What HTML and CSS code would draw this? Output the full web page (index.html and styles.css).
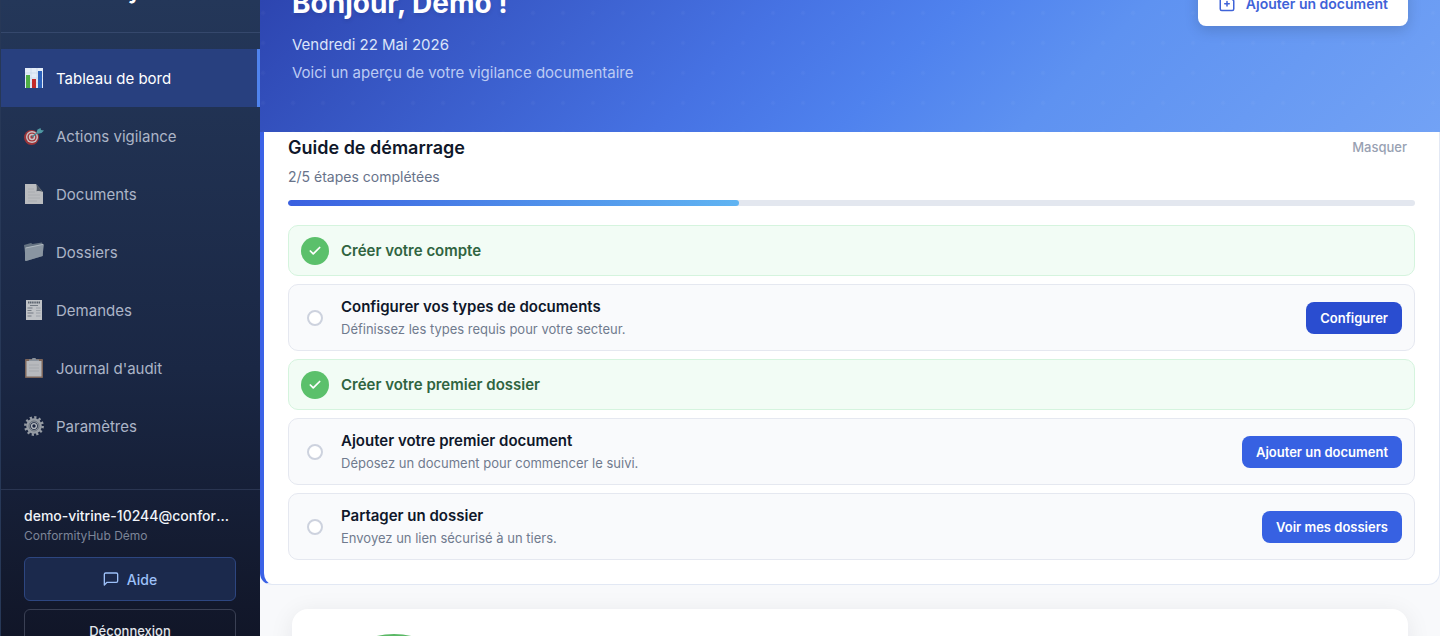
FILE: index.html
```html
<!DOCTYPE html>
<html lang="fr">
<head>
    <meta charset="UTF-8">
    <meta name="viewport" content="width=device-width, initial-scale=1.0">
    <title>ConformityHub - Tableau de bord</title>
    <link rel="stylesheet" href="styles.css">
</head>
<body>

    <aside class="sidebar">
        <div class="sidebar-header">
            <a href="#" class="brand">ConformityHub</a>
        </div>

        <nav class="sidebar-nav">
            <a href="#" class="nav-item active">
                <svg class="nav-icon" viewBox="0 0 20 20">
                    <rect x="1" y="0" width="18" height="20" fill="#e4edf8"/>
                    <path d="M1 5h18M1 10h18M1 15h18M7 0v20M13 0v20" stroke="#c3d3e8" stroke-width=".6"/>
                    <rect x="2" y="7" width="4" height="13" fill="#4fae45"/>
                    <rect x="8" y="11" width="4" height="9" fill="#c32a2a"/>
                    <rect x="14" y="3" width="4" height="17" fill="#2d63bd"/>
                </svg>
                Tableau de bord
            </a>
            <a href="#" class="nav-item">
                <svg class="nav-icon" viewBox="0 0 20 20">
                    <circle cx="7.500" cy="11.500" r="7.500" fill="#9c3439"/>
                    <circle cx="8" cy="11" r="6" fill="#c9c3c6"/>
                    <circle cx="8" cy="11" r="4.600" fill="#a5383d"/>
                    <circle cx="8" cy="11" r="3.200" fill="#c9c3c6"/>
                    <circle cx="8" cy="11" r="1.700" fill="#a5383d"/>
                    <path d="M8 11l7-5.500" stroke="#3d8590" stroke-width="1.300"/>
                    <path d="M12.500 6.500l1-3 3-1.500.5 2 3 .5-2.500 2.500-3.500.8z" fill="#4f98a3"/>
                </svg>
                Actions vigilance
            </a>
            <a href="#" class="nav-item">
                <svg class="nav-icon" viewBox="0 0 20 20">
                    <path d="M1 0h11l7 8v12H1z" fill="#b9bbbe"/>
                    <path d="M12 0l7 8c-2-1-4-1.300-6.500-.8C13 4.500 13 2 12 0z" fill="#4c5561"/>
                    <path d="M4 5h6M4 8h7M4 11h12M4 14h12M4 17h9" stroke="#a6a9ad" stroke-width=".8"/>
                </svg>
                Documents
            </a>
            <a href="#" class="nav-item">
                <svg class="nav-icon" viewBox="0 0 20 20">
                    <path d="M0 3l7-2 1.500 1L18 .5 19 3v11L2 19z" fill="#657382"/>
                    <path d="M2 5.500l17-3.500c.6 0 .9.300.8 1L18.500 14 2 19c-.6 0-1-.3-1-1L1 7c0-.8.400-1.300 1-1.500z" fill="#8995a1"/>
                    <path d="M1.500 6l17.500-3.600" stroke="#c0c8cf" stroke-width=".7"/>
                </svg>
                Dossiers
            </a>
            <a href="#" class="nav-item">
                <svg class="nav-icon" viewBox="0 0 20 20">
                    <path d="M2 0h16v20H2z" fill="#bfc2c6"/>
                    <path d="M4 2.500h12" stroke="#59616c" stroke-width="2" stroke-dasharray="1.300 .5"/>
                    <path d="M6 5.500h8M3.500 8h5M3.500 10.500h4M3.500 13h6M3.500 16h4" stroke="#6b737d" stroke-width=".9"/>
                    <path d="M12 8h4.500M12 10.500h4.500M12 13h4.500M12 16h4.500" stroke="#949aa2" stroke-width=".8"/>
                </svg>
                Demandes
            </a>
            <a href="#" class="nav-item">
                <svg class="nav-icon" viewBox="0 0 20 20">
                    <rect x="1" y="1" width="18" height="19" rx=".8" fill="#7b6459"/>
                    <rect x="2.500" y="3" width="15" height="15.500" fill="#b7b9bd"/>
                    <path d="M5 7h10M5 10h10M5 13h10" stroke="#a5a8ad" stroke-width=".9"/>
                    <path d="M5 3V1.500h3a2 2 0 014 0h3V3z" fill="#8a929c"/>
                </svg>
                Journal d'audit
            </a>
            <a href="#" class="nav-item">
                <svg class="nav-icon" viewBox="0 0 20 20" fill="none">
                    <circle cx="10" cy="10" r="8.600" stroke="#969ca4" stroke-width="2.600" stroke-dasharray="2.200 2.300"/>
                    <circle cx="10" cy="10" r="5.800" stroke="#969ca4" stroke-width="4"/>
                    <circle cx="10" cy="10" r="5" stroke="#666f7b" stroke-width="1"/>
                    <circle cx="10" cy="10" r="2.400" stroke="#b4b9bf" stroke-width="1.400"/>
                </svg>
                Paramètres
            </a>
        </nav>

        <div class="sidebar-footer">
            <div class="user-email">demo-vitrine-10244@conformityhub.fr</div>
            <div class="user-company">ConformityHub Démo</div>
            <button type="button" class="btn-help">
                <svg width="16" height="16" viewBox="0 0 24 24" fill="none" stroke="currentColor" stroke-width="2" stroke-linecap="round" stroke-linejoin="round">
                    <path d="M22 15a2 2 0 0 1-2 2H6l-4 4V5a2 2 0 0 1 2-2h16a2 2 0 0 1 2 2z"/>
                </svg>
                Aide
            </button>
            <button type="button" class="btn-logout">Déconnexion</button>
        </div>
    </aside>

    <main class="main">
        <header class="hero">
            <div class="hero-text">
                <h1>Bonjour, Démo !</h1>
                <p class="hero-date">Vendredi 22 Mai 2026</p>
                <p class="hero-subtitle">Voici un aperçu de votre vigilance documentaire</p>
            </div>
            <button type="button" class="btn-hero">
                <svg width="18" height="18" viewBox="0 0 24 24" fill="none" stroke="currentColor" stroke-width="2" stroke-linecap="round" stroke-linejoin="round">
                    <path d="M14 2H5a2 2 0 0 0-2 2v16a2 2 0 0 0 2 2h14a2 2 0 0 0 2-2V9z"/>
                    <path d="M12 10v6M9 13h6"/>
                </svg>
                Ajouter un document
            </button>
        </header>

        <section class="guide">
            <div class="guide-header">
                <h2>Guide de démarrage</h2>
                <button type="button" class="btn-hide">Masquer</button>
            </div>
            <p class="guide-count">2/5 étapes complétées</p>
            <div class="progress">
                <div class="progress-bar" style="width: 40%"></div>
            </div>

            <ul class="steps">
                <li class="step done">
                    <span class="step-icon">
                        <svg width="14" height="14" viewBox="0 0 24 24" fill="none" stroke="currentColor" stroke-width="3" stroke-linecap="round" stroke-linejoin="round"><path d="M20 6L9 17l-5-5"/></svg>
                    </span>
                    <h3>Créer votre compte</h3>
                </li>
                <li class="step">
                    <span class="step-icon"></span>
                    <div class="step-text">
                        <h3>Configurer vos types de documents</h3>
                        <p>Définissez les types requis pour votre secteur.</p>
                    </div>
                    <button type="button" class="btn-step hovered">Configurer</button>
                </li>
                <li class="step done">
                    <span class="step-icon">
                        <svg width="14" height="14" viewBox="0 0 24 24" fill="none" stroke="currentColor" stroke-width="3" stroke-linecap="round" stroke-linejoin="round"><path d="M20 6L9 17l-5-5"/></svg>
                    </span>
                    <h3>Créer votre premier dossier</h3>
                </li>
                <li class="step">
                    <span class="step-icon"></span>
                    <div class="step-text">
                        <h3>Ajouter votre premier document</h3>
                        <p>Déposez un document pour commencer le suivi.</p>
                    </div>
                    <button type="button" class="btn-step">Ajouter un document</button>
                </li>
                <li class="step">
                    <span class="step-icon"></span>
                    <div class="step-text">
                        <h3>Partager un dossier</h3>
                        <p>Envoyez un lien sécurisé à un tiers.</p>
                    </div>
                    <button type="button" class="btn-step">Voir mes dossiers</button>
                </li>
            </ul>
        </section>

        <section class="score-card">
            <svg class="score-ring" viewBox="0 0 140 140" fill="none">
                <circle cx="70" cy="70" r="64" stroke="#5bb966" stroke-width="12"/>
            </svg>
        </section>
    </main>

</body>
</html>
```
FILE: styles.css
```css
*, *::before, *::after {
    box-sizing: border-box;
}

body {
    font-family: Inter, "Liberation Sans", sans-serif;
    margin: 0;
    display: flex;
    height: 100vh;
    overflow: hidden;
    background-color: #f8f9fb;
    color: #0f172a;
}

h1, h2, h3, p, ul {
    margin: 0;
    padding: 0;
}

button {
    font-family: inherit;
    cursor: pointer;
}

/* Sidebar */
.sidebar {
    flex: 0 0 260px;
    min-width: 0;
    display: flex;
    flex-direction: column;
    border-left: 1px solid #273857;
    background: linear-gradient(180deg, #243759 0%, #1a2744 58%, #111628 100%);
}

.sidebar-header {
    display: flex;
    align-items: flex-end;
    height: 33px;
    padding: 0 23px 24px;
    border-bottom: 1px solid rgba(148, 170, 220, 0.16);
}

.brand {
    color: #fff;
    font-size: 21px;
    font-weight: 700;
    line-height: 32px;
    text-decoration: none;
}

.sidebar-nav {
    flex: 1 0 auto;
    padding: 16px 0 34px;
}

.nav-item {
    display: flex;
    align-items: center;
    gap: 12px;
    height: 58px;
    padding: 0 23px;
    color: #acb5c7;
    font-size: 15px;
    text-decoration: none;
}

.nav-item.active {
    color: #fff;
    background-color: #28407f;
    border-right: 3px solid #4f83ee;
}

.nav-icon {
    width: 20px;
    height: 20px;
}

.sidebar-footer {
    padding: 15px 24px 24px 23px;
    border-top: 1px solid rgba(148, 170, 220, 0.16);
}

.user-email {
    overflow: hidden;
    color: #f1f4f9;
    font-size: 14px;
    font-weight: 500;
    line-height: 22px;
    white-space: nowrap;
    text-overflow: ellipsis;
}

.user-company {
    margin-bottom: 13px;
    color: #7d8598;
    font-size: 12px;
    line-height: 17px;
}

.btn-help, .btn-logout {
    display: flex;
    align-items: center;
    justify-content: center;
    gap: 8px;
    width: 100%;
    height: 44px;
    border-radius: 6px;
    font-size: 14px;
    font-weight: 500;
}

.btn-help {
    margin-bottom: 8px;
    color: #9dc0f8;
    background-color: #1b294c;
    border: 1px solid #2d4680;
}

.btn-logout {
    color: #e3e6ec;
    background-color: transparent;
    border: 1px solid #3a4054;
    font-size: 13px;
}

/* Hero */
.main {
    flex: 1;
    min-width: 0;
}

.hero {
    display: flex;
    align-items: flex-end;
    justify-content: space-between;
    height: 132px;
    padding: 0 32px 46px;
    color: #fff;
    background:
        radial-gradient(circle, rgba(255, 255, 255, 0.03) 1px, transparent 3px) 18px 28px / 30px 30px,
        linear-gradient(135deg, #2d45b0 0%, #4672e3 40%, #4f82ee 54%, #5e92f1 68%, #72a2f5 100%);
}

.hero h1 {
    margin-bottom: 11px;
    font-size: 28px;
    font-weight: 700;
    line-height: 38px;
    text-shadow: 0 2px 4px rgba(0, 0, 0, 0.1);
}

.hero-date {
    margin-bottom: 3px;
    color: #dbe4f9;
    font-size: 15px;
    line-height: 24px;
}

.hero-subtitle {
    color: #bccbf3;
    font-size: 15px;
    line-height: 26px;
}

.btn-hero {
    display: flex;
    align-items: center;
    gap: 10px;
    height: 46px;
    margin-bottom: 60px;
    padding: 0 20px;
    border: none;
    border-radius: 8px;
    color: #3f63d8;
    background-color: #fff;
    font-size: 14px;
    font-weight: 600;
    box-shadow: 0 4px 14px rgba(0, 0, 0, 0.15);
}

/* Getting started guide */
.guide {
    padding: 0 24px 24px;
    border: 1px solid #e2e8f4;
    border-top: none;
    border-left: 4px solid #3b62e6;
    border-radius: 0 0 12px 12px;
    background-color: #fff;
}

.guide-header {
    display: flex;
    align-items: center;
    justify-content: space-between;
    height: 30px;
}

.guide-header h2 {
    font-size: 18px;
    font-weight: 600;
}

.btn-hide {
    padding: 4px 8px;
    border: none;
    color: #98a1b2;
    background: none;
    font-size: 13px;
    font-weight: 500;
}

.guide-count {
    margin: 4px 0 12px;
    color: #68738a;
    font-size: 14px;
    line-height: 22px;
}

.progress {
    height: 6px;
    margin-bottom: 19px;
    border-radius: 3px;
    background-color: #e3e7ef;
    overflow: hidden;
}

.progress-bar {
    height: 100%;
    border-radius: 3px;
    background: linear-gradient(90deg, #3a60e0, #60b4f2);
}

.steps {
    display: flex;
    flex-direction: column;
    gap: 8px;
    list-style: none;
}

.step {
    display: flex;
    align-items: center;
    gap: 12px;
    min-height: 51px;
    padding: 10px 12px;
    border: 1px solid #e5e8f0;
    border-radius: 10px;
    background-color: #f9fafc;
}

.step h3 {
    font-size: 15px;
    font-weight: 600;
    line-height: 24px;
}

.step-text {
    flex: 1;
}

.step-text p {
    color: #707a8e;
    font-size: 13px;
    line-height: 21px;
}

.step-icon {
    display: flex;
    align-items: center;
    justify-content: center;
    width: 28px;
    height: 28px;
}

.step-icon:empty::before {
    content: "";
    width: 16px;
    height: 16px;
    border: 2px solid #cdd2de;
    border-radius: 50%;
    background-color: #fff;
}

.step.done {
    border-color: #d5f4de;
    background-color: #f2fcf5;
}

.step.done h3 {
    color: #2f6440;
}

.step.done .step-icon {
    border-radius: 50%;
    color: #fff;
    background-color: #5bc06b;
}

.btn-step {
    height: 32px;
    padding: 0 14px;
    border: none;
    border-radius: 8px;
    color: #fff;
    background-color: #3761e2;
    font-size: 13px;
    font-weight: 600;
}

.btn-step.hovered {
    background-color: #2a4dd0;
}

/* Score */
.score-card {
    margin: 24px 32px;
    padding: 25px 32px;
    border-radius: 16px;
    background-color: #fff;
    box-shadow: 0 4px 24px rgba(15, 23, 42, 0.08);
}

.score-ring {
    display: block;
    width: 140px;
    height: 140px;
}
```
